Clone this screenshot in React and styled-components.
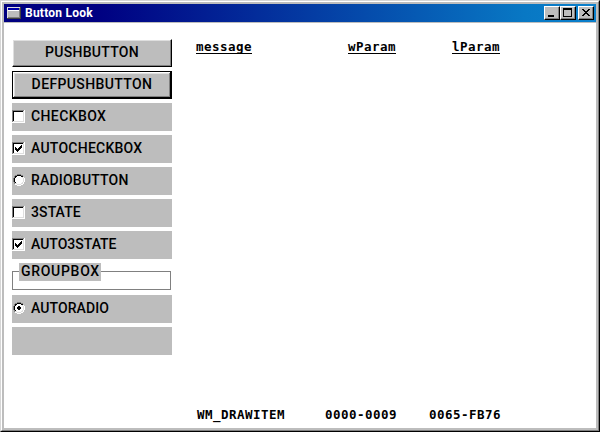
import React from "react";
import styled, { createGlobalStyle, css } from "styled-components";

const Global = createGlobalStyle`
  * { box-sizing: border-box; }
  body { margin: 0; background: #fff; overflow: hidden; }
`;

const Frame = styled.div`
  width: 600px;
  height: 432px;
  border: 1px solid;
  border-color: #d6d6d6 #000 #000 #d6d6d6;
`;
const Bevel = styled.div`
  height: 100%;
  border: 1px solid;
  border-color: #fff #808080 #808080 #fff;
`;
const Inner = styled.div`
  height: 100%;
  border: 2px solid #bdbdbd;
  display: flex;
  flex-direction: column;
  background: #fff;
`;
const TitleBar = styled.header`
  height: 19px;
  flex: none;
  display: flex;
  align-items: flex-start;
  padding: 2px 2px 0 3px;
  border-bottom: 1px solid #bdbdbd;
  background: linear-gradient(90deg, #000080 0, #000082 16%, #0878c4 88%, #0b80cc 100%);
  & > svg { margin-top: 1px; }
`;
const Title = styled.h1`
  margin: 0 auto 0 4px;
  font: bold 12px/15px "Roboto", sans-serif;
  letter-spacing: 0.24px;
  color: #fff;
  white-space: nowrap;
`;
const Caption = styled.button`
  width: 16px;
  height: 14px;
  padding: 0;
  margin-left: ${(p) => p.$gap || 0}px;
  border: 1px solid;
  border-color: #fff #000 #000 #fff;
  background: #bdbdbd;
  box-shadow: inset -1px -1px #808080;
  svg { display: block; }
`;
const Client = styled.main`
  flex: 1;
  display: flex;
  padding: 16px 0 0 8px;
`;
const Controls = styled.div`
  width: 160px;
  display: flex;
  flex-direction: column;
  gap: 4px;
`;
const Label = styled.span`
  height: 28px;
  font: 500 14px/26px "Roboto", sans-serif;
  color: #000;
  white-space: nowrap;
  letter-spacing: ${(p) => p.$spacing || 0}px;
`;
const raised = css`
  border-color: #fff #000 #000 #fff;
  box-shadow: inset -1px -1px #808080, inset 1px 1px #dfdfdf;
`;
const raisedDefault = css`
  border-color: #000;
  box-shadow: inset -1px -1px #000, inset 1px 1px #fff, inset -2px -2px #808080, inset 2px 2px #dfdfdf;
`;
const Push = styled.button`
  height: 28px;
  padding: 0;
  display: flex;
  justify-content: center;
  align-items: center;
  background: #bdbdbd;
  border: 1px solid;
  ${(p) => (p.$default ? raisedDefault : raised)}
`;
const Row = styled.label`
  height: 28px;
  display: flex;
  align-items: center;
  gap: 6px;
  background: #bdbdbd;
  svg { flex: none; margin-bottom: 1px; }
`;
const Group = styled.fieldset`
  height: 28px;
  margin: 0;
  padding: 0 0 0 7px;
  min-width: 0;
  border: 0;
  display: flex;
  align-items: flex-start;
  background: linear-gradient(#808080, #808080) 0 8px / 159px 1px no-repeat,
    linear-gradient(#808080, #808080) 0 26px / 159px 1px no-repeat,
    linear-gradient(#808080, #808080) 0 8px / 1px 19px no-repeat,
    linear-gradient(#808080, #808080) 158px 8px / 1px 19px no-repeat;
`;
const GroupLabel = styled(Label)`
  height: 18px;
  width: 82px;
  padding-left: 2px;
  line-height: 17px;
  background: #bdbdbd;
`;
const Log = styled.section`
  width: 305px;
  margin-left: 24px;
  display: flex;
  flex-direction: column;
  justify-content: space-between;
  padding-bottom: 5px;
`;
const LogRow = styled.div`
  display: grid;
  grid-template-columns: 96px 104px 104px;
  font: bold 12.5px/16px "DejaVu Sans Mono", monospace;
  letter-spacing: 0.475px;
  color: #000;
`;
const Heading = styled.span`
  justify-self: ${(p) => (p.$end ? "end" : "start")};
  height: 15px;
  line-height: 16px;
  border-bottom: 1px solid #000;
`;
const Value = styled.span`
  justify-self: ${(p) => (p.$end ? "end" : "start")};
  margin: 0 -1px 0 1px;
`;

function AppIcon() {
  return (
    <svg width="14" height="12" shapeRendering="crispEdges">
      <path d="M0 0h14v12H0z" fill="#404040" />
      <path d="M0 0h13v11H0z" fill="#dfdfdf" />
      <path d="M1 1h12v10H1z" fill="#bdbdbd" />
      <path d="M1 1h11v2H1z" fill="#0000a8" />
      <path d="M1 3h12v1H1z" fill="#fff" />
      <path d="M1 10h12v1H1zM12 1h1v10h-1z" fill="#808080" />
    </svg>
  );
}

function Check({ on }) {
  return (
    <svg width="13" height="13" shapeRendering="crispEdges">
      <path d="M0 0h13v13H0z" fill="#fff" />
      <path d="M0 0h12v1H1v11H0z" fill="#808080" />
      <path d="M1 1h10v1H2v9H1z" fill="#000" />
      <path d="M11 1h1v11H1v-1h10z" fill="#dfdfdf" />
      {on && <path d="M3 5h1v1h1v1h1V6h1V5h1V4h1V3h1v3H9v1H8v1H7v1H6v1H5V9H4V8H3z" fill="#000" />}
    </svg>
  );
}

function Radio({ on }) {
  return (
    <svg width="13" height="13" viewBox="-1 0 13 13" shapeRendering="crispEdges">
      <path d="M4 1h4v1h2v1h1v1h1v4h-1v2h-1v1H8v1H4v-1H2v-1H1V8H0V4h1V2h3z" fill="#fff" />
      <path d="M4 0h4v1H4zM2 1h2v1H2zM8 1h2v1H8zM1 2h1v2H1zM0 4h1v4H0zM1 8h1v2H1z" fill="#808080" />
      <path d="M4 1h4v1H4zM2 2h2v1H2zM8 2h2v1H8zM2 3h1v1H2zM1 4h1v4H1zM2 8h1v1H2z" fill="#000" />
      <path d="M9 3h1v1H9zM10 4h1v4h-1zM9 8h1v1H9zM2 9h2v1H2zM8 9h2v1H8zM4 10h4v1H4z" fill="#dfdfdf" />
      {on && <path d="M5 4h2v1h1v2H7v1H5V7H4V5h1z" fill="#000" />}
    </svg>
  );
}

export default function App() {
  return (
    <>
      <Global />
      <Frame>
        <Bevel>
          <Inner>
            <TitleBar>
              <AppIcon />
              <Title>Button Look</Title>
              <Caption aria-label="Minimize">
                <svg width="14" height="12"><path d="M3 8h6v2H3z" /></svg>
              </Caption>
              <Caption aria-label="Maximize">
                <svg width="14" height="12"><path fillRule="evenodd" d="M2 1h9v9H2zM3 3v6h7V3z" /></svg>
              </Caption>
              <Caption aria-label="Close" $gap={2}>
                <svg width="14" height="12" shapeRendering="crispEdges">
                  <path d="M3 2h2v1h1v1h2V3h1V2h2v1h-1v1H9v1H8v1h1v1h1v1h1v1H9V8H8V7H6v1H5v1H3V8h1V7h1V6h1V5H5V4H4V3H3z" />
                </svg>
              </Caption>
            </TitleBar>
            <Client>
              <Controls>
                <Push><Label $spacing={0.3}>PUSHBUTTON</Label></Push>
                <Push $default><Label $spacing={0.38}>DEFPUSHBUTTON</Label></Push>
                <Row><Check /><Label $spacing={0.4}>CHECKBOX</Label></Row>
                <Row><Check on /><Label $spacing={0.25}>AUTOCHECKBOX</Label></Row>
                <Row><Radio /><Label $spacing={0.2}>RADIOBUTTON</Label></Row>
                <Row><Check /><Label $spacing={0.1}>3STATE</Label></Row>
                <Row><Check on /><Label>AUTO3STATE</Label></Row>
                <Group><GroupLabel $spacing={0.7}>GROUPBOX</GroupLabel></Group>
                <Row><Radio on /><Label $spacing={0.1}>AUTORADIO</Label></Row>
                <Row />
              </Controls>
              <Log>
                <LogRow>
                  <Heading>message</Heading>
                  <Heading $end>wParam</Heading>
                  <Heading $end>lParam</Heading>
                </LogRow>
                <LogRow>
                  <Value>WM_DRAWITEM</Value>
                  <Value $end>0000-0009</Value>
                  <Value $end>0065-FB76</Value>
                </LogRow>
              </Log>
            </Client>
          </Inner>
        </Bevel>
      </Frame>
    </>
  );
}
